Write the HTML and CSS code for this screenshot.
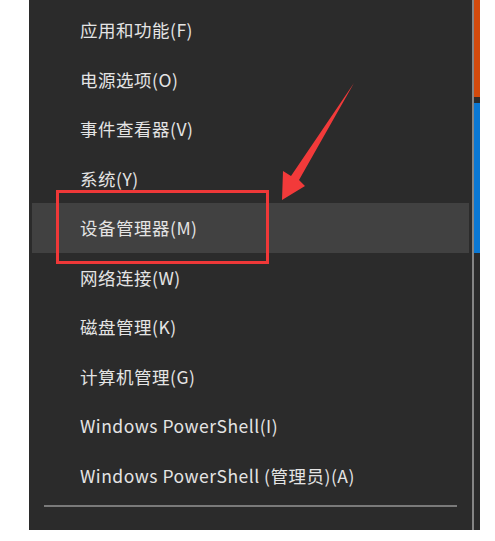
FILE: index.html
```html
<!DOCTYPE html>
<html lang="zh-CN">

<head>
    <meta charset="UTF-8">
    <title>快速链接菜单</title>
    <link rel="stylesheet" href="styles.css">
</head>

<body>
    <div class="screen">
        <div class="menu">
            <div class="menu-item">应用和功能(F)</div>
            <div class="menu-item">电源选项(O)</div>
            <div class="menu-item">事件查看器(V)</div>
            <div class="menu-item">系统(Y)</div>
            <div class="menu-item active">设备管理器(M)</div>
            <div class="menu-item">网络连接(W)</div>
            <div class="menu-item">磁盘管理(K)</div>
            <div class="menu-item">计算机管理(G)</div>
            <div class="menu-item">Windows PowerShell(I)</div>
            <div class="menu-item">Windows PowerShell (管理员)(A)</div>
            <div class="separator"></div>

            <div class="mark-box"></div>
            <svg class="arrow" width="495" height="541" viewBox="0 0 495 541">
                <polygon points="354,83 299,180 305,186 282,200 283,171 291,176" fill="#f23a3a" />
            </svg>
        </div>
        <div class="tiles">
            <div class="tile orange"></div>
            <div class="tile blue"></div>
        </div>
    </div>
</body>

</html>
```

FILE: styles.css
```css
* {
    margin: 0;
    padding: 0;
    box-sizing: border-box;
}

body {
    background-color: #ffffff;
    font-family: 'Noto Sans CJK SC', 'Noto Sans', sans-serif;
    width: 495px;
    height: 541px;
    overflow: hidden;
}

.screen {
    display: flex;
    margin-left: 29px;
    height: 530px;
}

.menu {
    width: 445px;
    background-color: #2b2b2b;
    border-right: 2px solid #858585;
    padding-top: 5px;
}

.menu-item {
    height: 49.5px;
    margin: 0 3px;
    padding-left: 48px;
    display: flex;
    align-items: center;
    color: #e4e4e4;
    font-size: 17.5px;
    letter-spacing: 0.5px;
}

.menu-item.active {
    background-color: #414141;
}

.separator {
    height: 2px;
    margin: 5px 15px 0 15px;
    background-color: #7a7a7a;
}

.mark-box {
    position: absolute;
    left: 56px;
    top: 190px;
    width: 213px;
    height: 74px;
    border: 3px solid #ef3838;
}

.arrow {
    position: absolute;
    left: 0;
    top: 0;
    pointer-events: none;
}

.tiles {
    width: 6px;
    background-color: #2b2b2b;
    display: flex;
    flex-direction: column;
    gap: 6px;
}

.tile.orange {
    height: 97px;
    background-color: #d24a0c;
}

.tile.blue {
    height: 150px;
    background-color: #0a78d4;
}
```
